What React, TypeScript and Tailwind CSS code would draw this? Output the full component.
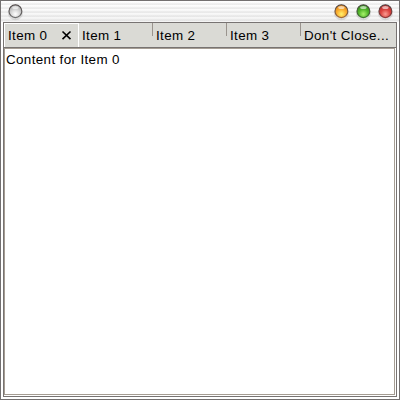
import React from "react";

type OrbProps = { id: string; top: string; mid: string; low: string; rim: string };

// Glossy round title bar button
function Orb({ id, top, mid, low, rim }: OrbProps) {
  return (
    <svg width="18" height="20" viewBox="0 0 18 20" className="block shrink-0">
      <defs>
        <radialGradient id={id} cx="0.5" cy="0.72" r="0.72">
          <stop offset="0" stopColor={low} />
          <stop offset="0.5" stopColor={mid} />
          <stop offset="1" stopColor={top} />
        </radialGradient>
        <linearGradient id={id + "rim"} x1="0" y1="0" x2="0" y2="1">
          <stop offset="0" stopColor="#4a4242" />
          <stop offset="1" stopColor={rim} />
        </linearGradient>
      </defs>
      <ellipse cx="9.4" cy="11.8" rx="7.6" ry="7.4" fill="#000" opacity="0.1" />
      <circle cx="9.4" cy="10.2" r="6.4" fill={`url(#${id})`} stroke={`url(#${id}rim)`} strokeWidth="1.1" />
      <ellipse cx="9.4" cy="6.4" rx="3.2" ry="1.5" fill="#fff" opacity="0.6" />
    </svg>
  );
}

function Tab({ label, last }: { label: string; last?: boolean }) {
  return (
    <div className={"flex h-6 shrink-0 items-start " + (last ? "flex-1" : "w-[74px]")}>
      <span className="flex-1 whitespace-nowrap pl-[3px] pt-[5px] leading-4">{label}</span>
      {!last && <span className="h-[13px] w-px bg-[#9a948e]" />}
    </div>
  );
}

export default function App() {
  return (
    <div className="flex h-[400px] w-[400px] flex-col border border-[#737070] bg-white font-['Liberation_Sans',Arial,sans-serif] text-[13.4px] tracking-[0.37px] text-black">
      <div className="flex h-[21px] shrink-0 items-start justify-between overflow-hidden bg-[linear-gradient(180deg,rgba(0,0,0,0)_0%,rgba(0,0,0,0.04)_100%),repeating-linear-gradient(180deg,#ffffff_0px,#fafafa_2px,#e9e9e9_3px,#f4f4f4_4px)] px-[5px]">
        <Orb id="menu" top="#a0a0a0" mid="#d4d4d4" low="#ffffff" rim="#707070" />
        <div className="flex gap-1">
          <Orb id="min" top="#dc7c14" mid="#fbb030" low="#fff26e" rim="#a06a38" />
          <Orb id="max" top="#2c8416" mid="#54b82c" low="#a8f26c" rim="#3f7530" />
          <Orb id="close" top="#b42828" mid="#dc4440" low="#fb9c92" rim="#8f3a3a" />
        </div>
      </div>
      <div className="mx-[2px] mb-[2px] flex min-h-0 flex-1 flex-col border border-[#777372]">
        <div className="flex h-[25px] shrink-0 border-b border-[#777372] bg-[#dadad5]">
          <div className="flex h-6 w-[75px] shrink-0 items-start border-t border-l border-r border-white bg-[#dadad5]">
            <span className="flex-1 pl-[3px] pt-1 leading-4">Item 0</span>
            <svg width="11" height="11" viewBox="0 0 11 11" className="mt-[6px] mr-[6px]">
              <path d="M1.5 1.5 9.5 9.2M9.5 1.5 1.5 9.2" stroke="#000" strokeWidth="1.6" fill="none" />
            </svg>
          </div>
          <Tab label="Item 1" />
          <Tab label="Item 2" />
          <Tab label="Item 3" />
          <Tab label="Don't Close..." last />
        </div>
        <div className="mr-px mb-px flex-1 border border-[#a59d93] bg-white pl-px pt-[3px] leading-4">
          Content for Item 0
        </div>
      </div>
    </div>
  );
}
